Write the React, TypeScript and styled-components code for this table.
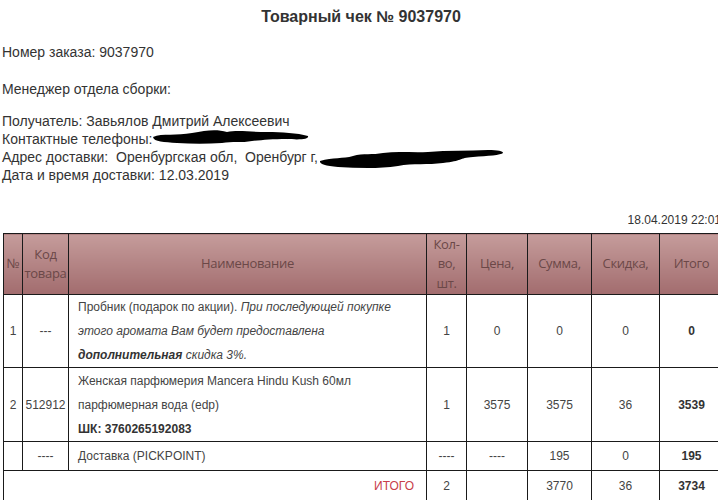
import React from "react";
import styled, { createGlobalStyle } from "styled-components";

const Global = createGlobalStyle`
  html, body { margin: 0; padding: 0; background: #fff; overflow: hidden; }
  body { font-family: "Liberation Sans", Arial, sans-serif; color: #333; }
`;

const Page = styled.div`
  width: 740px;
  padding: 0 0 0 2px;
  box-sizing: border-box;
`;

const Title = styled.h1`
  width: 718px;
  margin: 0;
  padding-top: 7px;
  font-size: 16px;
  line-height: 20px;
  font-weight: bold;
  text-align: center;
  color: #333;
`;

const Info = styled.div<{ $gap: number }>`
  margin-top: ${(p) => p.$gap}px;
  font-size: 14px;
  line-height: 18px;
  color: #333;
  white-space: nowrap;
`;

const Line = styled.div`
  display: flex;
  align-items: center;
  height: 18px;
`;

const Scribble = styled.svg<{ $dy: number }>`
  flex: none;
  display: block;
  margin-top: ${(p) => p.$dy}px;
  margin-bottom: ${(p) => -p.$dy}px;
`;

const Stamp = styled.div`
  width: 719px;
  margin-top: 27px;
  text-align: right;
  font-size: 12px;
  line-height: 18px;
  color: #333;
  white-space: nowrap;
`;

const Table = styled.table`
  margin-top: 4px;
  margin-left: 1px;
  border-collapse: collapse;
  table-layout: fixed;
  width: 720px;
  font-size: 12px;
  color: #444;
`;

const Th = styled.th`
  border: 1px solid #1a1a1a;
  background: linear-gradient(#c59c9b, #a26c6e);
  color: #6b4848;
  font-family: "Open Sans", sans-serif;
  font-weight: normal;
  font-size: 13px;
  letter-spacing: -0.3px;
  line-height: 19.5px;
  height: 60px;
  padding: 0;
  text-align: center;
  vertical-align: middle;
`;

const Td = styled.td<{ $bold?: boolean; $h: number }>`
  border: 1px solid #1a1a1a;
  height: ${(p) => p.$h}px;
  padding: 0;
  text-align: center;
  vertical-align: middle;
  font-weight: ${(p) => (p.$bold ? "bold" : "normal")};
  color: ${(p) => (p.$bold ? "#333" : "#444")};
`;

const NameTd = styled.td<{ $h: number }>`
  border: 1px solid #1a1a1a;
  height: ${(p) => p.$h}px;
  padding: 0 4px 0 9px;
  text-align: left;
  vertical-align: middle;
  line-height: 24px;
  color: #444;
`;

const TotalLabel = styled.td`
  border: 1px solid #1a1a1a;
  height: 29px;
  padding: 0 12px 0 0;
  text-align: right;
  color: #c8404a;
  vertical-align: middle;
`;

const Strong = styled.b`
  color: #333;
`;

function Blot1() {
  return (
    <Scribble $dy={-2} width="158" height="18" viewBox="0 0 158 18">
      <path
        d="M1 9 C10 5 25 8 40 5 C55 2 65 1 75 4 C85 2 100 4 115 4 C130 4 145 5 156 8 C157 11 150 12 135 11 C120 11 110 12 100 13 C90 15 80 13 70 15 C55 16 40 16 25 15 C12 14 2 14 1 9 Z"
        fill="#000"
      />
    </Scribble>
  );
}

function Blot2() {
  return (
    <Scribble $dy={2} width="186" height="22" viewBox="0 0 186 22">
      <path
        d="M2 13 C15 9 25 11 35 8 C45 5 55 7 65 5 C80 3 95 5 110 4 C130 2 150 3 170 2 C180 2 185 3 185 5 C183 7 170 8 155 9 C140 10 145 13 125 15 C110 17 95 15 80 18 C60 21 40 20 20 19 C8 18 1 16 2 13 Z"
        fill="#000"
      />
    </Scribble>
  );
}

export default function App() {
  return (
    <Page>
      <Global />
      <Title>Товарный чек № 9037970</Title>
      <Info $gap={16}>
        <Line>Номер заказа: 9037970</Line>
      </Info>
      <Info $gap={19}>
        <Line>Менеджер отдела сборки:</Line>
      </Info>
      <Info $gap={14}>
        <Line>Получатель: Завьялов Дмитрий Алексеевич</Line>
        <Line>
          Контактные телефоны:
          <Blot1 />
        </Line>
        <Line>
          Адрес доставки:&nbsp; Оренбургская обл,&nbsp; Оренбург г,
          <Blot2 />
        </Line>
        <Line>Дата и время доставки: 12.03.2019</Line>
      </Info>
      <Stamp>18.04.2019 22:01</Stamp>
      <Table>
        <colgroup>
          <col style={{ width: 19 }} />
          <col style={{ width: 46 }} />
          <col style={{ width: 358 }} />
          <col style={{ width: 40 }} />
          <col style={{ width: 61 }} />
          <col style={{ width: 64 }} />
          <col style={{ width: 68 }} />
          <col style={{ width: 64 }} />
        </colgroup>
        <thead>
          <tr>
            <Th>№</Th>
            <Th>
              Код
              <br />
              товара
            </Th>
            <Th>Наименование</Th>
            <Th>
              Кол-
              <br />
              во,
              <br />
              шт.
            </Th>
            <Th>Цена,</Th>
            <Th>Сумма,</Th>
            <Th>Скидка,</Th>
            <Th>Итого</Th>
          </tr>
        </thead>
        <tbody>
          <tr>
            <Td $h={72}>1</Td>
            <Td $h={72}>---</Td>
            <NameTd $h={72}>
              Пробник (подарок по акции). <i>При последующей покупке этого аромата Вам будет предоставлена</i>
              <br />
              <i>
                <Strong>дополнительная</Strong> скидка 3%.
              </i>
            </NameTd>
            <Td $h={72}>1</Td>
            <Td $h={72}>0</Td>
            <Td $h={72}>0</Td>
            <Td $h={72}>0</Td>
            <Td $h={72} $bold>
              0
            </Td>
          </tr>
          <tr>
            <Td $h={73}>2</Td>
            <Td $h={73}>512912</Td>
            <NameTd $h={73}>
              Женская парфюмерия Mancera Hindu Kush 60мл
              <br />
              парфюмерная вода (edp)
              <br />
              <Strong>ШК: 3760265192083</Strong>
            </NameTd>
            <Td $h={73}>1</Td>
            <Td $h={73}>3575</Td>
            <Td $h={73}>3575</Td>
            <Td $h={73}>36</Td>
            <Td $h={73} $bold>
              3539
            </Td>
          </tr>
          <tr>
            <Td $h={28}></Td>
            <Td $h={28}>----</Td>
            <NameTd $h={28}>Доставка (PICKPOINT)</NameTd>
            <Td $h={28}>----</Td>
            <Td $h={28}>----</Td>
            <Td $h={28}>195</Td>
            <Td $h={28}>0</Td>
            <Td $h={28} $bold>
              195
            </Td>
          </tr>
          <tr>
            <TotalLabel colSpan={3}>ИТОГО</TotalLabel>
            <Td $h={29}>2</Td>
            <Td $h={29}></Td>
            <Td $h={29}>3770</Td>
            <Td $h={29}>36</Td>
            <Td $h={29} $bold>
              3734
            </Td>
          </tr>
        </tbody>
      </Table>
    </Page>
  );
}
